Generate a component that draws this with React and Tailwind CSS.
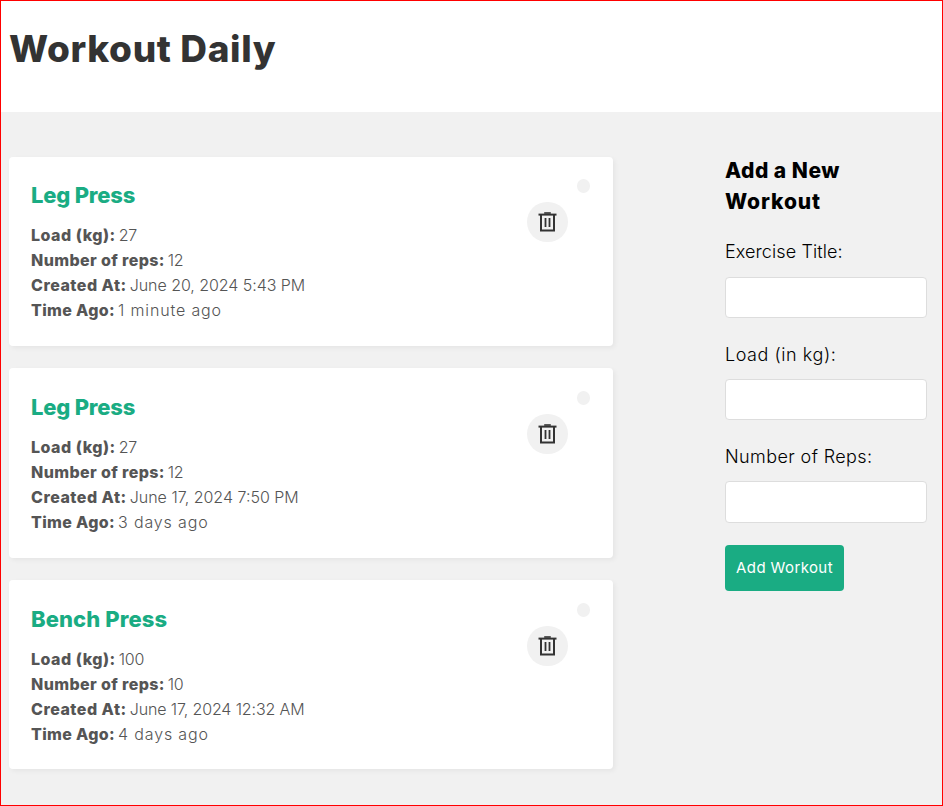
const WORKOUTS = [
  {
    title: "Leg Press",
    titleClass: "tracking-[-0.2px]",
    rows: [
      ["Load (kg):", "tracking-[0.48px]", "27", "tracking-[-0.2px]"],
      ["Number of reps:", "tracking-[0.38px]", "12", "tracking-[-0.5px]"],
      ["Created At:", "tracking-[0.5px]", "June 20, 2024 5:43 PM", "tracking-[-0.05px]"],
      ["Time Ago:", "tracking-[0.35px]", "1 minute ago", "tracking-[0.85px]"],
    ],
  },
  {
    title: "Leg Press",
    titleClass: "tracking-[-0.2px]",
    rows: [
      ["Load (kg):", "tracking-[0.48px]", "27", "tracking-[-0.2px]"],
      ["Number of reps:", "tracking-[0.38px]", "12", "tracking-[-0.5px]"],
      ["Created At:", "tracking-[0.5px]", "June 17, 2024 7:50 PM", "tracking-normal"],
      ["Time Ago:", "tracking-[0.35px]", "3 days ago", "tracking-[0.85px]"],
    ],
  },
  {
    title: "Bench Press",
    titleClass: "tracking-[0.1px]",
    rows: [
      ["Load (kg):", "tracking-[0.48px]", "100", "tracking-[-0.2px]"],
      ["Number of reps:", "tracking-[0.38px]", "10", "tracking-[-0.4px]"],
      ["Created At:", "tracking-[0.5px]", "June 17, 2024 12:32 AM", "tracking-[-0.13px]"],
      ["Time Ago:", "tracking-[0.35px]", "4 days ago", "tracking-[0.85px]"],
    ],
  },
];

const FIELDS = [
  ["Exercise Title:", "tracking-[0.1px]"],
  ["Load (in kg):", "tracking-[0.55px]"],
  ["Number of Reps:", "tracking-[0.4px]"],
];

function TrashIcon() {
  return (
    <svg width="20" height="20" viewBox="0 0 20 20" fill="none" stroke="#333" strokeWidth="2">
      <path d="M0.5 2.6h18" />
      <path d="M6.2 1h6.6" strokeWidth="1.6" />
      <path d="M3 2.6v16h13v-16" />
      <path d="M7.5 6v9M11.5 6v9" strokeWidth="1.8" />
    </svg>
  );
}

function WorkoutCard({ workout }) {
  return (
    <article className="flex h-[189.45px] justify-between rounded bg-white pt-[22px] pr-[23px] pl-[22px] shadow-[2px_2px_5px_rgba(0,0,0,0.05)] not-first:pt-[22.7px]">
      <div>
        <h4 className={`mb-[11px] text-[22px] leading-[33px] font-extrabold text-[#1aac83] ${workout.titleClass}`}>
          {workout.title}
        </h4>
        {workout.rows.map(([label, labelClass, value, valueClass]) => (
          <p key={label} className="flex h-[25px] items-center gap-[3px] text-base leading-[25px] text-[#555]">
            <strong className={`font-extrabold ${labelClass}`}>{label}</strong>
            <span className={`font-light ${valueClass}`}>{value}</span>
          </p>
        ))}
      </div>
      <div className="flex">
        <button className="mt-[23px] mr-[9px] flex h-10 w-[41px] items-center justify-center rounded-full bg-[#f1f1f1]">
          <TrashIcon />
        </button>
        <span className="h-3.5 w-[13px] rounded-full bg-[#f1f1f1]" />
      </div>
    </article>
  );
}

export default function App() {
  return (
    <div className="h-[806px] w-[943px] overflow-hidden border border-[#ff0000] bg-[#f1f1f1] font-['Inter','Liberation_Sans',sans-serif]">
      <header className="h-[111px] bg-white pt-5 pl-2">
        <h1 className="text-[37px] leading-[55px] font-extrabold tracking-[0.65px] text-[#333]">Workout Daily</h1>
      </header>
      <div className="flex pt-[45px] pl-2">
        <main className="flex w-[604px] flex-col gap-[22px]">
          {WORKOUTS.map((workout, i) => (
            <WorkoutCard key={i} workout={workout} />
          ))}
        </main>
        <form className="ml-28 w-[202px]">
          <h3 className="mt-[-2px] mb-[21.25px] text-[21px] leading-[31px] font-extrabold text-black">
            <span className="block tracking-[0.5px]">Add a New</span>
            <span className="block tracking-[0.9px]">Workout</span>
          </h3>
          {FIELDS.map(([label, labelClass]) => (
            <label key={label} className="mb-[22px] block h-[80.3px] text-[18px] leading-7 font-light text-black">
              <span className={`block h-7 ${labelClass}`}>{label}</span>
              <input className="mt-[10.5px] block h-[41.3px] w-full rounded border border-[#ddd] bg-white px-2.5" />
            </label>
          ))}
          <button className="h-[46px] w-[119px] rounded bg-[#1aac83] text-[15px] tracking-[0.4px] whitespace-nowrap text-white">
            Add Workout
          </button>
        </form>
      </div>
    </div>
  );
}
